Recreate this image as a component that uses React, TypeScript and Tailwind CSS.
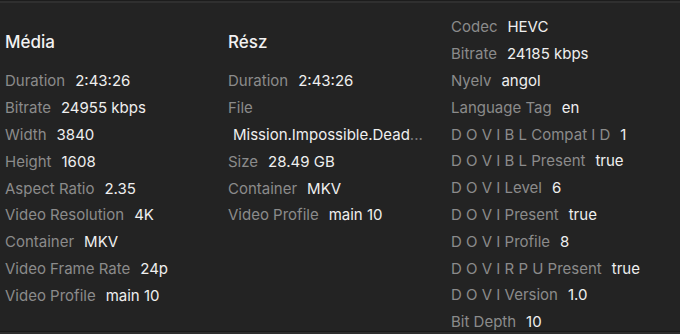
import React from "react";

type Row = { label: string; value?: React.ReactNode };

const media: Row[] = [
  { label: "Duration", value: "2:43:26" },
  { label: "Bitrate", value: "24955 kbps" },
  { label: "Width", value: "3840" },
  { label: "Height", value: "1608" },
  { label: "Aspect Ratio", value: "2.35" },
  { label: "Video Resolution", value: "4K" },
  { label: "Container", value: "MKV" },
  { label: "Video Frame Rate", value: "24p" },
  { label: "Video Profile", value: "main 10" },
];

const part: Row[] = [
  { label: "Duration", value: "2:43:26" },
  { label: "File" },
];

const partRest: Row[] = [
  { label: "Size", value: "28.49 GB" },
  { label: "Container", value: "MKV" },
  { label: "Video Profile", value: "main 10" },
];

const stream: Row[] = [
  { label: "Codec", value: "HEVC" },
  { label: "Bitrate", value: "24185 kbps" },
  { label: "Nyelv", value: "angol" },
  { label: "Language Tag", value: "en" },
  { label: "D O V I B L Compat I D", value: "1" },
  { label: "D O V I B L Present", value: "true" },
  { label: "D O V I Level", value: "6" },
  { label: "D O V I Present", value: "true" },
  { label: "D O V I Profile", value: "8" },
  { label: "D O V I R P U Present", value: "true" },
  { label: "D O V I Version", value: "1.0" },
  { label: "Bit Depth", value: "10" },
];

function InfoRow({ label, value }: Row) {
  return (
    <div className="flex h-[26.8px] items-center gap-[10px] whitespace-nowrap leading-[26px]">
      <span className="text-[#8b8b8b]">{label}</span>
      {value !== undefined && <span className="text-[#efefef]">{value}</span>}
    </div>
  );
}

function Heading({ children }: { children: React.ReactNode }) {
  return (
    <h2 className="mt-[27px] mb-[14px] h-[24px] text-[17px] leading-[24px] font-medium text-[#f2f2f2]">
      {children}
    </h2>
  );
}

export default function App() {
  return (
    <div
      className="flex h-[334px] w-[680px] flex-col overflow-hidden bg-[#232323] text-[15px]"
      style={{ fontFamily: "Inter, 'Noto Sans', sans-serif" }}
    >
      {/* top edge */}
      <div className="h-[3px] shrink-0 border-t border-[#1c1c1c] bg-[#2f2f2f]" />

      <div className="grid min-h-0 flex-1 grid-cols-[223px_223px_1fr] overflow-hidden pl-[5px]">
        {/* Média */}
        <div>
          <Heading>Média</Heading>
          {media.map((r) => (
            <InfoRow key={r.label} {...r} />
          ))}
        </div>

        {/* Rész */}
        <div>
          <Heading>Rész</Heading>
          {part.map((r) => (
            <InfoRow key={r.label} {...r} />
          ))}
          <div className="flex h-[26.8px] items-center whitespace-nowrap pl-[5px] leading-[26px] text-[#efefef]">
            Mission.Impossible.Dead
            <span className="text-[#7a7a7a]">...</span>
          </div>
          {partRest.map((r) => (
            <InfoRow key={r.label} {...r} />
          ))}
        </div>

        {/* Stream details */}
        <div className="pt-[11px]">
          {stream.map((r) => (
            <InfoRow key={r.label} {...r} />
          ))}
        </div>
      </div>

      {/* bottom edge */}
      <div className="h-[3px] shrink-0 border-t border-[#1a1a1a] bg-[#2d2d2d]" />
    </div>
  );
}
